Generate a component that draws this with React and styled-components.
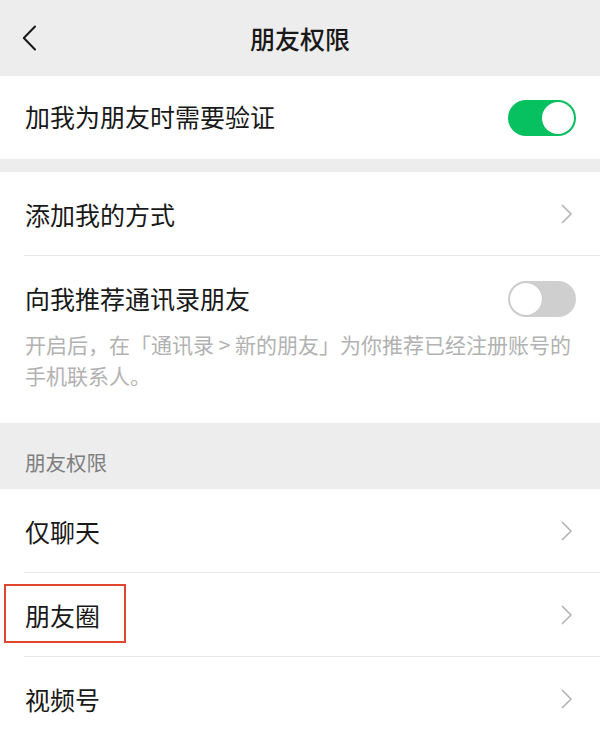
import React from "react";
import styled, { createGlobalStyle } from "styled-components";

const GlobalStyle = createGlobalStyle`
  html, body { margin: 0; padding: 0; background: #ffffff; }
  body {
    font-family: "Noto Sans CJK SC", "Noto Sans", "Liberation Sans", sans-serif;
    -webkit-font-smoothing: antialiased;
  }
  * { box-sizing: border-box; }
`;

const Page = styled.div`
  width: 600px;
  min-height: 731px;
  background: #ededed;
  overflow: hidden;
`;

const NavBar = styled.header`
  display: grid;
  grid-template-columns: 80px 1fr 80px;
  align-items: center;
  height: 76px;
  background: #ededed;
`;

const BackButton = styled.button`
  display: flex;
  align-items: center;
  height: 76px;
  padding: 0 0 0 22px;
  margin: 0;
  border: none;
  background: transparent;
  cursor: pointer;
`;

const NavTitle = styled.h1`
  margin: 0;
  text-align: center;
  font-size: 25px;
  font-weight: 500;
  color: #191919;
  line-height: 36px;
`;

const Group = styled.section`
  background: #ffffff;
`;

const Gap = styled.div`
  height: 13px;
  background: #ededed;
`;

const Cell = styled.div`
  position: relative;
  display: flex;
  align-items: center;
  justify-content: space-between;
  height: 83px;
  padding: 0 24px 0 25px;
  background: #ffffff;
`;

const CellLabel = styled.span`
  font-size: 25px;
  line-height: 36px;
  color: #191919;
  font-weight: 400;
  padding-bottom: ${(p) => p.$lift || 0}px;
`;

const Divider = styled.div`
  height: 1px;
  margin-left: 24px;
  background: #e6e6e6;
`;

const SwitchBlock = styled.div`
  display: flex;
  flex-direction: column;
  padding: 25px 24px 32px 25px;
  background: #ffffff;
`;

const SwitchRow = styled.div`
  display: flex;
  align-items: center;
  justify-content: space-between;
  height: 36px;
`;

const Desc = styled.p`
  margin: 12px 0 0 0;
  width: 553px;
  font-size: 21px;
  line-height: 31px;
  color: #b2b2b2;
`;

const SectionHeader = styled.div`
  height: 66px;
  padding: 25px 25px 0 25px;
  background: #ededed;
  font-size: 20.5px;
  line-height: 28px;
  color: #7f7f7f;
`;

const Toggle = styled.span`
  position: relative;
  display: inline-block;
  flex: none;
  width: 68px;
  height: 36px;
  border-radius: 18px;
  background: ${(p) => (p.$on ? "#07c160" : "#cfcfcf")};

  &::after {
    content: "";
    position: absolute;
    top: 2px;
    left: ${(p) => (p.$on ? "34px" : "2px")};
    width: 32px;
    height: 32px;
    border-radius: 50%;
    background: #ffffff;
    box-shadow: 0 0 0 0.5px rgba(0, 0, 0, 0.06);
  }
`;

const Chevron = styled.svg`
  flex: none;
  width: 12px;
  height: 20px;
  margin-right: 3px;
`;

const Highlight = styled.div`
  position: absolute;
  left: 4px;
  top: 11px;
  width: 122px;
  height: 59px;
  border: 2px solid #e0452f;
  pointer-events: none;
`;

function ArrowRight() {
  return (
    <Chevron viewBox="0 0 12 20" fill="none">
      <path d="M1.5 1.5 L10 10 L1.5 18.5" stroke="#b5b5b5" strokeWidth="1.7" strokeLinecap="round" strokeLinejoin="round" />
    </Chevron>
  );
}

function BackIcon() {
  return (
    <svg width="15" height="26" viewBox="0 0 15 26" fill="none">
      <path d="M13 1.5 L1.8 13 L13 24.5" stroke="#191919" strokeWidth="2" strokeLinecap="round" strokeLinejoin="round" />
    </svg>
  );
}

function LinkCell({ label, highlight }) {
  return (
    <Cell>
      <CellLabel>{label}</CellLabel>
      <ArrowRight />
      {highlight && <Highlight />}
    </Cell>
  );
}

export default function App() {
  return (
    <>
      <GlobalStyle />
      <Page>
        <NavBar>
          <BackButton aria-label="返回">
            <BackIcon />
          </BackButton>
          <NavTitle>朋友权限</NavTitle>
          <span />
        </NavBar>

        <Group>
          <Cell>
            <CellLabel $lift={4}>加我为朋友时需要验证</CellLabel>
            <Toggle $on />
          </Cell>
        </Group>

        <Gap />

        <Group>
          <LinkCell label="添加我的方式" />
          <Divider />
          <SwitchBlock>
            <SwitchRow>
              <CellLabel $lift={3}>向我推荐通讯录朋友</CellLabel>
              <Toggle />
            </SwitchRow>
            <Desc>开启后，在「通讯录 &gt; 新的朋友」为你推荐已经注册账号的手机联系人。</Desc>
          </SwitchBlock>
        </Group>

        <SectionHeader>朋友权限</SectionHeader>

        <Group>
          <LinkCell label="仅聊天" />
          <Divider />
          <LinkCell label="朋友圈" highlight />
          <Divider />
          <LinkCell label="视频号" />
        </Group>
      </Page>
    </>
  );
}
